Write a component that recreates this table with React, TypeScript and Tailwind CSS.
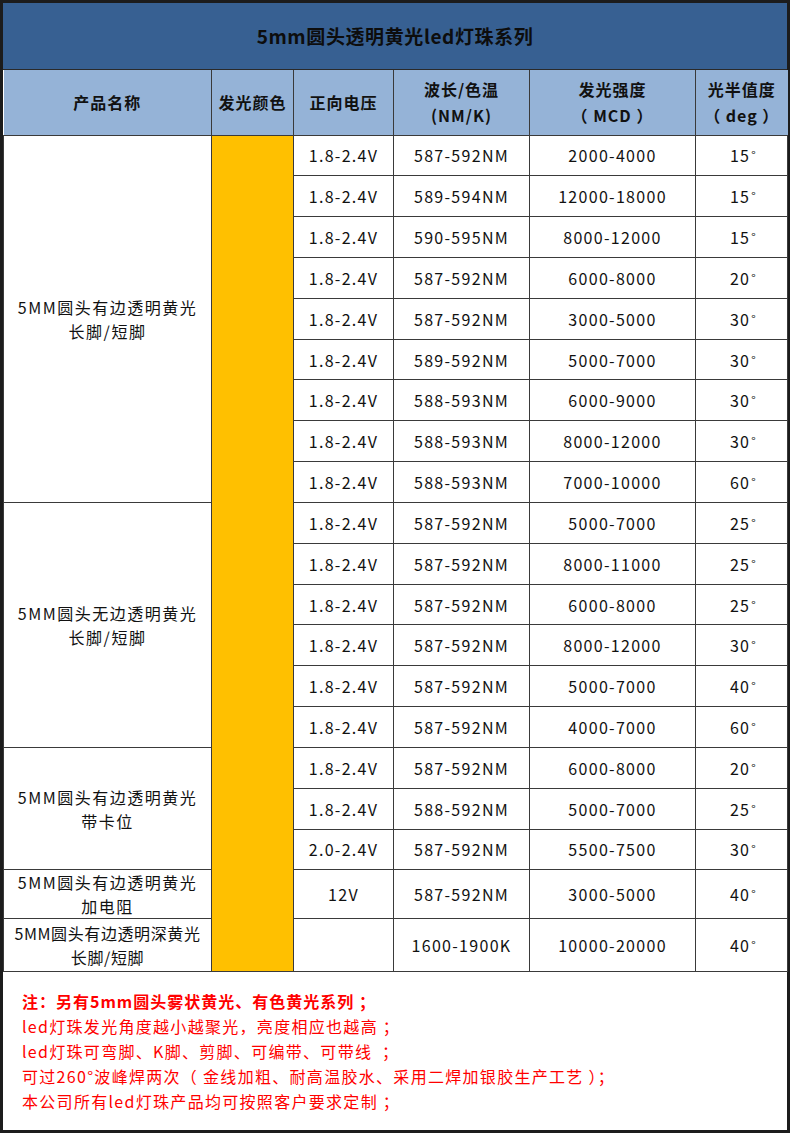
import React from "react";

type Row = { v: string; w: string; m: string; d: string };

const g1: Row[] = [
  { v: "1.8-2.4V", w: "587-592NM", m: "2000-4000", d: "15°" },
  { v: "1.8-2.4V", w: "589-594NM", m: "12000-18000", d: "15°" },
  { v: "1.8-2.4V", w: "590-595NM", m: "8000-12000", d: "15°" },
  { v: "1.8-2.4V", w: "587-592NM", m: "6000-8000", d: "20°" },
  { v: "1.8-2.4V", w: "587-592NM", m: "3000-5000", d: "30°" },
  { v: "1.8-2.4V", w: "589-592NM", m: "5000-7000", d: "30°" },
  { v: "1.8-2.4V", w: "588-593NM", m: "6000-9000", d: "30°" },
  { v: "1.8-2.4V", w: "588-593NM", m: "8000-12000", d: "30°" },
  { v: "1.8-2.4V", w: "588-593NM", m: "7000-10000", d: "60°" },
];
const g2: Row[] = [
  { v: "1.8-2.4V", w: "587-592NM", m: "5000-7000", d: "25°" },
  { v: "1.8-2.4V", w: "587-592NM", m: "8000-11000", d: "25°" },
  { v: "1.8-2.4V", w: "587-592NM", m: "6000-8000", d: "25°" },
  { v: "1.8-2.4V", w: "587-592NM", m: "8000-12000", d: "30°" },
  { v: "1.8-2.4V", w: "587-592NM", m: "5000-7000", d: "40°" },
  { v: "1.8-2.4V", w: "587-592NM", m: "4000-7000", d: "60°" },
];
const g3: Row[] = [
  { v: "1.8-2.4V", w: "587-592NM", m: "6000-8000", d: "20°" },
  { v: "1.8-2.4V", w: "588-592NM", m: "5000-7000", d: "25°" },
  { v: "2.0-2.4V", w: "587-592NM", m: "5500-7500", d: "30°" },
];

const td = "border border-[#3a3a3a] text-center align-middle p-0";
const nameTd = `${td} leading-[24px] tracking-[1.5px]`;

function Deg({ s }: { s: string }) {
  const n = s.replace("°", "");
  return (
    <span className="pl-[4px]">
      {n}
      <span className="text-[12px] relative -top-[2px] ml-[1px]">°</span>
    </span>
  );
}

function DataCells({ r }: { r: Row }) {
  return (
    <>
      <td className={td}>{r.v}</td>
      <td className={td}>{r.w}</td>
      <td className={td}>{r.m}</td>
      <td className={td}>
        <Deg s={r.d} />
      </td>
    </>
  );
}

function Group({
  rows,
  name,
  first,
}: {
  rows: Row[];
  name: React.ReactNode;
  first?: boolean;
}) {
  return (
    <>
      {rows.map((r, i) => (
        <tr key={i} className="h-[40.83px]">
          {i === 0 && (
            <td className={nameTd} rowSpan={rows.length}>
              {name}
            </td>
          )}
          {i === 0 && first && (
            <td className={`${td} bg-[#ffc000]`} rowSpan={20}></td>
          )}
          <DataCells r={r} />
        </tr>
      ))}
    </>
  );
}

export default function App() {
  return (
    <div className="w-[790px] h-[1135px] bg-white">
      <div
        className="w-[790px] h-[1133px] border-[3px] border-[#1c1c1c] flex flex-col text-[#111] tracking-[1.3px]"
        style={{ fontFamily: '"Noto Sans CJK SC", "Noto Sans", sans-serif' }}
      >
        <div className="h-[67px] bg-[#376092] flex items-center justify-center font-bold text-[19px] text-[#0d0d0d] tracking-[0.6px] border-b border-[#2a2a2a]">
          5mm圆头透明黄光led灯珠系列
        </div>
        <table className="w-[784px] border-collapse table-fixed text-[16px]">
          <colgroup>
            <col className="w-[208px]" />
            <col className="w-[82px]" />
            <col className="w-[100px]" />
            <col className="w-[136px]" />
            <col className="w-[166px]" />
            <col className="w-[92px]" />
          </colgroup>
          <tbody>
            <tr className="h-[65px] bg-[#95b3d7] font-bold leading-[26px] tracking-[1px]">
              <td className={`${td} border-t-0 border-l-0`}>产品名称</td>
              <td className={`${td} border-t-0`}>发光颜色</td>
              <td className={`${td} border-t-0`}>正向电压</td>
              <td className={`${td} border-t-0`}>
                波长/色温
                <br />
                (NM/K)
              </td>
              <td className={`${td} border-t-0`}>
                发光强度
                <br />（ MCD ）
              </td>
              <td className={`${td} border-t-0 border-r-0`}>
                光半值度
                <br />（ deg ）
              </td>
            </tr>
            <Group
              rows={g1}
              first
              name={
                <>
                  5MM圆头有边透明黄光
                  <br />
                  长脚/短脚
                </>
              }
            />
            <Group
              rows={g2}
              name={
                <>
                  5MM圆头无边透明黄光
                  <br />
                  长脚/短脚
                </>
              }
            />
            <Group
              rows={g3}
              name={
                <>
                  5MM圆头有边透明黄光
                  <br />
                  带卡位
                </>
              }
            />
            <tr className="h-[49px]">
              <td className={nameTd}>
                5MM圆头有边透明黄光
                <br />
                加电阻
              </td>
              <td className={td}>12V</td>
              <td className={td}>587-592NM</td>
              <td className={td}>3000-5000</td>
              <td className={td}>
                <Deg s="40°" />
              </td>
            </tr>
            <tr className="h-[53px]">
              <td className={`${td} leading-[24px] tracking-[0.6px]`}>
                5MM圆头有边透明深黄光
                <br />
                长脚/短脚
              </td>
              <td className={td}></td>
              <td className={td}>1600-1900K</td>
              <td className={td}>10000-20000</td>
              <td className={td}>
                <Deg s="40°" />
              </td>
            </tr>
          </tbody>
        </table>
        <div className="flex-1 pl-[19px] pt-[17px] text-[#ff0000] text-[16px] leading-[25px] tracking-[1.3px]">
          <div className="font-bold tracking-[1px]">注：另有5mm圆头雾状黄光、有色黄光系列 ；</div>
          <div>led灯珠发光角度越小越聚光，亮度相应也越高 ；</div>
          <div>led灯珠可弯脚、K脚、剪脚、可编带、可带线 &nbsp;；</div>
          <div>可过260°波峰焊两次（ 金线加粗、耐高温胶水、采用二焊加银胶生产工艺 ）；</div>
          <div>本公司所有led灯珠产品均可按照客户要求定制 ；</div>
        </div>
      </div>
    </div>
  );
}
